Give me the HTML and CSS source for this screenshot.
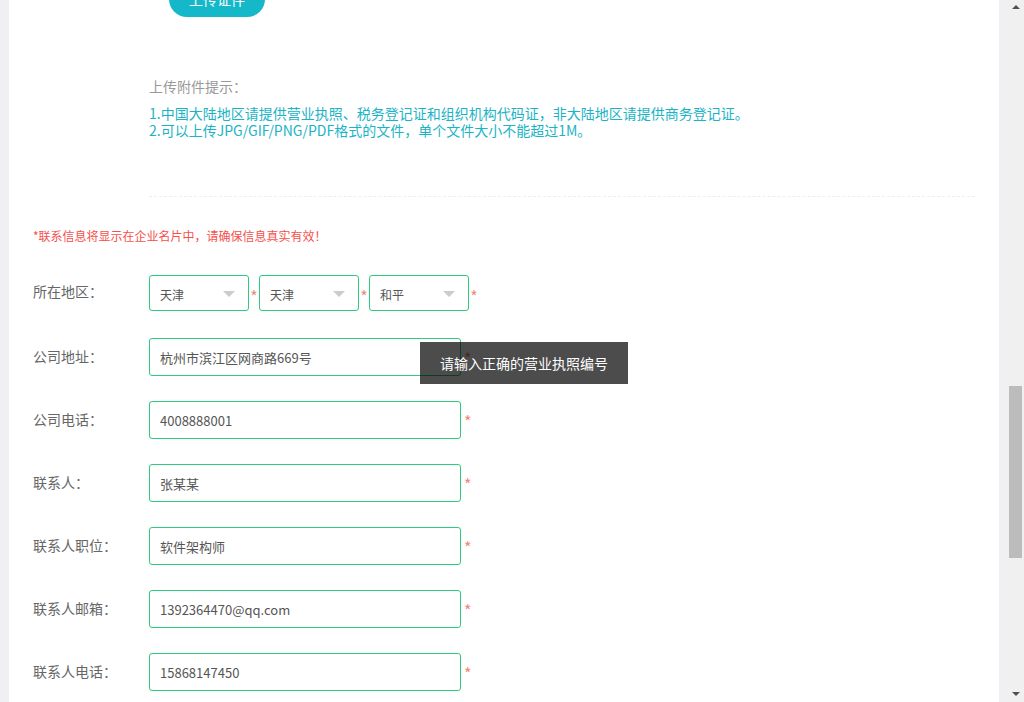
FILE: index.html
```html
<!DOCTYPE html>
<html lang="zh-CN">
<head>
<meta charset="utf-8">
<title>企业信息</title>
<link rel="stylesheet" href="styles.css">
</head>
<body>
<div class="gutter"></div>
<main class="page">
  <div class="upload-row"><button class="upload-btn">上传证件</button></div>
  <section class="tips">
    <p class="tips-title">上传附件提示：</p>
    <p class="tips-line">1.中国大陆地区请提供营业执照、税务登记证和组织机构代码证，非大陆地区请提供商务登记证。</p>
    <p class="tips-line">2.可以上传JPG/GIF/PNG/PDF格式的文件，单个文件大小不能超过1M。</p>
  </section>
  <div class="divider"></div>
  <p class="notice">*联系信息将显示在企业名片中，请确保信息真实有效！</p>
  <form class="form">
    <div class="row">
      <label class="label label-sel">所在地区：</label>
      <div class="select"><span>天津</span><i class="caret"></i></div><span class="req req-sel">*</span>
      <div class="select"><span>天津</span><i class="caret"></i></div><span class="req req-sel">*</span>
      <div class="select"><span>和平</span><i class="caret"></i></div><span class="req req-sel">*</span>
    </div>
    <div class="row">
      <label class="label">公司地址：</label>
      <div class="input">杭州市滨江区网商路669号</div><span class="req">*</span>
    </div>
    <div class="row">
      <label class="label">公司电话：</label>
      <div class="input">4008888001</div><span class="req">*</span>
    </div>
    <div class="row">
      <label class="label">联系人：</label>
      <div class="input">张某某</div><span class="req">*</span>
    </div>
    <div class="row">
      <label class="label">联系人职位：</label>
      <div class="input">软件架构师</div><span class="req">*</span>
    </div>
    <div class="row">
      <label class="label">联系人邮箱：</label>
      <div class="input">1392364470@qq.com</div><span class="req">*</span>
    </div>
    <div class="row">
      <label class="label">联系人电话：</label>
      <div class="input">15868147450</div><span class="req">*</span>
    </div>
  </form>
  <div class="tooltip">请输入正确的营业执照编号</div>
</main>
<div class="gutter-r"></div>
<div class="scrollbar">
  <span class="arrow up"></span>
  <div class="track"><div class="thumb"></div></div>
  <span class="arrow down"></span>
</div>
</body>
</html>
```

FILE: styles.css
```css
* { box-sizing: border-box; }
html, body { margin: 0; padding: 0; }
body {
  display: flex;
  height: 702px;
  overflow: hidden;
  background: #f0f0f2;
  font-family: "Noto Sans CJK SC", "Liberation Sans", sans-serif;
}
.gutter { width: 9px; flex: none; }
.gutter-r { width: 8px; flex: none; }
.page {
  position: relative;
  width: 990px;
  flex: none;
  background: #fff;
}
p { margin: 0; }
.upload-row { margin: -19px 0 0 160px; }
.upload-btn {
  width: 96px;
  height: 36px;
  border: none;
  border-radius: 18px;
  background: #14b8c8;
  color: #fff;
  font: 14px/36px "Noto Sans CJK SC", sans-serif;
  padding: 0;
}
.tips { margin: 59px 0 0 140px; }
.tips-title { font-size: 14px; line-height: 20px; color: #999; margin-bottom: 9px; }
.tips-line { font-size: 14px; line-height: 17px; color: #1ab4c5; }
.divider {
  margin: 57px 24px 0 140px;
  border-top: 1px dashed #eee;
}
.notice {
  margin: 31px 0 0 24px;
  font-size: 12px;
  line-height: 16px;
  color: #f5504d;
}
.form { margin-top: 31px; }
.row {
  display: flex;
  align-items: flex-start;
  height: 63px;
  padding-left: 24px;
}
.label {
  width: 116px;
  flex: none;
  font-size: 14px;
  line-height: 36px;
  color: #666;
}
.label-sel { line-height: 32px; }
.select {
  position: relative;
  width: 100px;
  height: 36px;
  border: 1px solid #2ccb7e;
  border-radius: 3px;
  padding-left: 10px;
  font-size: 12px;
  line-height: 38px;
  color: #555;
}
.caret {
  position: absolute;
  right: 13px;
  top: 15px;
  width: 0; height: 0;
  border-left: 6px solid transparent;
  border-right: 6px solid transparent;
  border-top: 6px solid #ccc;
}
.req {
  color: #f0887c;
  font-size: 16px;
  line-height: 40px;
  margin-left: 3px;
}
.req-sel { width: 10px; margin-left: 0; text-align: center; line-height: 42px; }
.input {
  width: 312px;
  height: 38px;
  border: 1px solid #2ccb7e;
  border-radius: 3px;
  padding-left: 10px;
  font-size: 13px;
  line-height: 38px;
  color: #555;
}
.tooltip {
  position: absolute;
  left: 411px;
  top: 342px;
  width: 208px;
  height: 42px;
  background: rgba(0, 0, 0, 0.7);
  color: #fff;
  font-size: 14px;
  line-height: 42px;
  text-align: center;
}
.scrollbar {
  width: 17px;
  flex: none;
  background: #f0f0f0;
  display: flex;
  flex-direction: column;
  align-items: center;
}
.arrow { width: 0; height: 0; flex: none; border-left: 4px solid transparent; border-right: 4px solid transparent; }
.arrow.up { margin-top: 5px; border-bottom: 4px solid #505050; }
.arrow.down { margin-bottom: 6px; border-top: 4px solid #505050; }
.track { flex: 1; width: 100%; padding: 0 2px; }
.thumb { margin-top: 377px; height: 172px; background: #bcbcbc; }
```
